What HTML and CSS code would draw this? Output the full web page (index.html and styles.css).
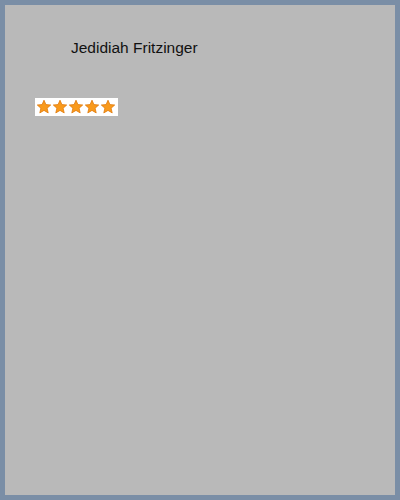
FILE: index.html
```html
<!DOCTYPE html>
<html>
<head>
<meta charset="utf-8">
<link rel="stylesheet" href="styles.css">
</head>
<body>
<div class="frame">
  <div class="name">Jedidiah Fritzinger</div>
  <div class="rating">
    <svg class="star" viewBox="0 0 16 16"><path d="M8 1.2 L9.9 5.6 L14.7 6 L11.1 9.2 L12.2 13.9 L8 11.4 L3.8 13.9 L4.9 9.2 L1.3 6 L6.1 5.6 Z"/></svg>
    <svg class="star" viewBox="0 0 16 16"><path d="M8 1.2 L9.9 5.6 L14.7 6 L11.1 9.2 L12.2 13.9 L8 11.4 L3.8 13.9 L4.9 9.2 L1.3 6 L6.1 5.6 Z"/></svg>
    <svg class="star" viewBox="0 0 16 16"><path d="M8 1.2 L9.9 5.6 L14.7 6 L11.1 9.2 L12.2 13.9 L8 11.4 L3.8 13.9 L4.9 9.2 L1.3 6 L6.1 5.6 Z"/></svg>
    <svg class="star" viewBox="0 0 16 16"><path d="M8 1.2 L9.9 5.6 L14.7 6 L11.1 9.2 L12.2 13.9 L8 11.4 L3.8 13.9 L4.9 9.2 L1.3 6 L6.1 5.6 Z"/></svg>
    <svg class="star" viewBox="0 0 16 16"><path d="M8 1.2 L9.9 5.6 L14.7 6 L11.1 9.2 L12.2 13.9 L8 11.4 L3.8 13.9 L4.9 9.2 L1.3 6 L6.1 5.6 Z"/></svg>
  </div>
</div>
</body>
</html>
```
FILE: styles.css
```css
html, body {
  margin: 0;
  padding: 0;
}
.frame {
  width: 400px;
  height: 500px;
  box-sizing: border-box;
  border: 5px solid #7a8ea6;
  background: #b9b9b9;
  padding: 34px 0 0 30px;
  font-family: "Liberation Sans", Arial, sans-serif;
}
.name {
  margin-left: 36px;
  font-size: 15.5px;
  line-height: 18px;
  color: #111;
}
.rating {
  margin-top: 41px;
  display: inline-flex;
  background: #fff;
  padding: 1px 2px 1px 1px;
}
.star {
  width: 16px;
  height: 16px;
  display: block;
}
.star path {
  fill: #f99a1c;
  stroke: #e0780a;
  stroke-width: 0.8;
  stroke-linejoin: round;
}
```
